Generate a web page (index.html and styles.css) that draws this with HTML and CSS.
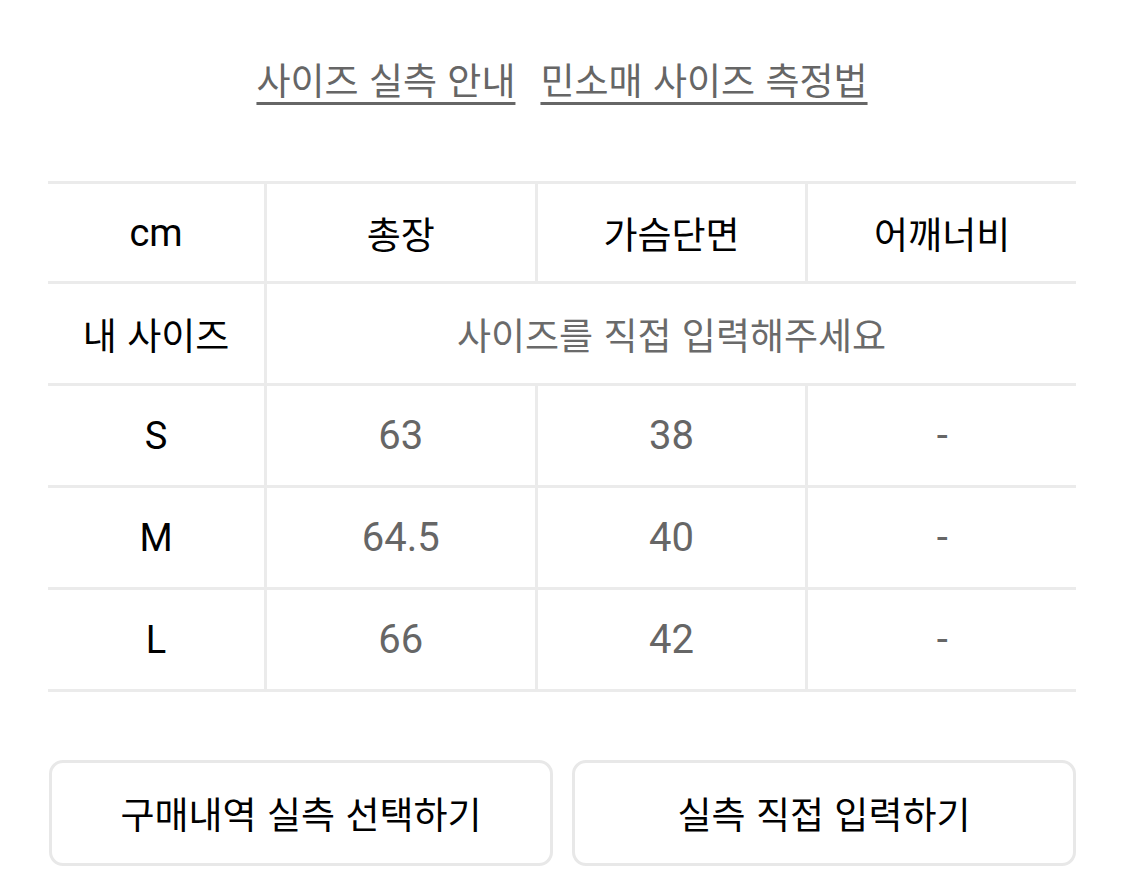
FILE: index.html
```html
<!DOCTYPE html>
<html lang="ko">
<head>
<meta charset="utf-8">
<title>사이즈</title>
<link rel="stylesheet" href="styles.css">
</head>
<body>
<div class="page">
  <div class="links">
    <a class="link" href="#">사이즈 실측 안내</a>
    <a class="link" href="#">민소매 사이즈 측정법</a>
  </div>

  <div class="size-table">
    <div class="cell head first latin">cm</div>
    <div class="cell head">총장</div>
    <div class="cell head">가슴단면</div>
    <div class="cell head">어깨너비</div>

    <div class="cell row first">내 사이즈</div>
    <div class="cell row span3 muted">사이즈를 직접 입력해주세요</div>

    <div class="cell row first latin">S</div>
    <div class="cell row num">63</div>
    <div class="cell row num">38</div>
    <div class="cell row num">-</div>

    <div class="cell row first latin">M</div>
    <div class="cell row num">64.5</div>
    <div class="cell row num">40</div>
    <div class="cell row num">-</div>

    <div class="cell row first latin">L</div>
    <div class="cell row num">66</div>
    <div class="cell row num">42</div>
    <div class="cell row num">-</div>
  </div>

  <div class="actions">
    <button class="btn" type="button">구매내역 실측 선택하기</button>
    <button class="btn" type="button">실측 직접 입력하기</button>
  </div>
</div>
</body>
</html>
```

FILE: styles.css
```css
* { box-sizing: border-box; }

html, body {
  margin: 0;
  padding: 0;
  background: #ffffff;
}

body {
  font-family: Roboto, "Noto Sans CJK KR", sans-serif;
  color: #000000;
}

.page {
  width: 1125px;
  padding: 0 49px 0 48px;
}

.links {
  display: flex;
  justify-content: center;
  gap: 25px;
  padding-top: 54px;
  height: 181px;
}

.link {
  font-family: "Noto Sans CJK KR", sans-serif;
  font-size: 37px;
  line-height: 50px;
  color: #666666;
  text-decoration: underline;
  text-decoration-thickness: 3px;
  text-underline-offset: 7px;
  text-decoration-color: #666666;
}

.size-table {
  display: grid;
  grid-template-columns: 216px repeat(3, 1fr);
  border-top: 3px solid #ebebeb;
}

.cell {
  display: flex;
  align-items: center;
  justify-content: center;
  height: 102px;
  border-bottom: 3px solid #ebebeb;
  border-left: 3px solid #ebebeb;
  font-size: 37px;
  font-family: "Noto Sans CJK KR", sans-serif;
  font-weight: 400;
  color: #000000;
}

.cell.head { height: 100px; }

.cell.first { border-left: none; }

.cell.latin {
  font-family: Roboto, "Noto Sans CJK KR", sans-serif;
  font-size: 38px;
  font-weight: 400;
}

.cell.span3 { grid-column: span 3; }

.cell.muted {
  color: #6a6a6a;
}

.cell.num {
  font-family: Roboto, sans-serif;
  font-size: 40px;
  font-weight: 400;
  color: #666666;
}

.actions {
  display: flex;
  gap: 19px;
  margin-top: 68px;
  padding-left: 1px;
}

.btn {
  flex: 1;
  height: 106px;
  background: #ffffff;
  border: 3px solid #e8e8e8;
  border-radius: 14px;
  font-family: "Noto Sans CJK KR", sans-serif;
  font-size: 37px;
  font-weight: 400;
  color: #000000;
  padding: 0;
}
```
